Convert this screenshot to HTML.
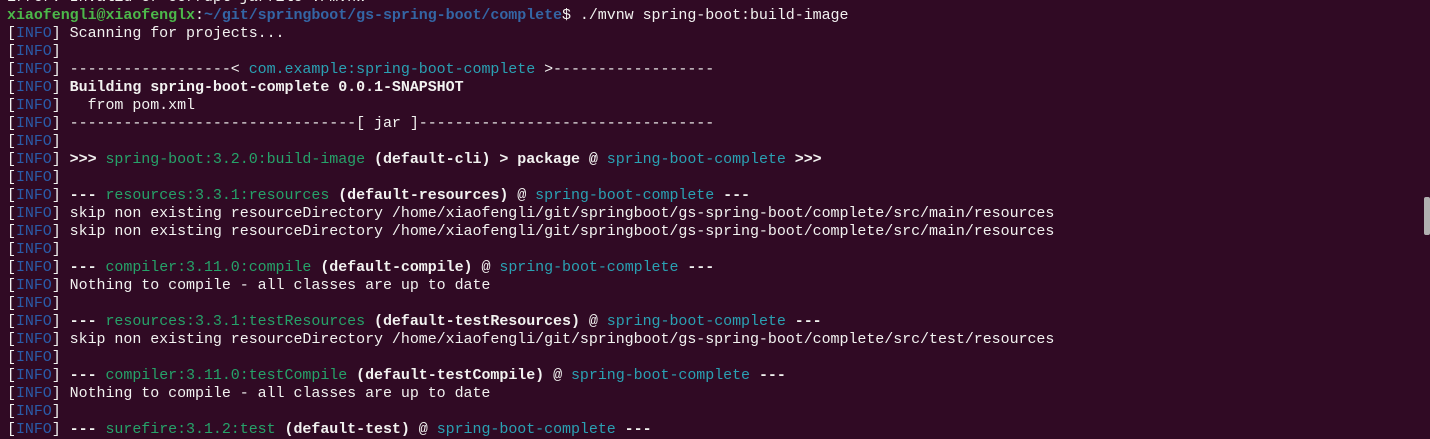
<!DOCTYPE html>
<html><head><meta charset="utf-8"><style>
html,body{margin:0;padding:0;background:#300a24;width:1430px;height:424px;overflow:hidden}
pre{position:absolute;left:7px;top:-11px;margin:0;font:15px/18px "Liberation Mono",monospace;color:#f2f2f0;letter-spacing:-0.05px}
.i{color:#2a5ba8}.b{font-weight:bold}.g{color:#26a269}.c{color:#2aa1b3}.p{color:#3465a4;font-weight:bold}.pg{color:#4cb84a;font-weight:bold}
#sb{position:absolute;left:1424px;top:197px;width:6px;height:38px;background:#b0b0b0;border-radius:2px}
</style></head><body>
<pre>Error: Invalid or corrupt jarfile ./mvnw
<span class="pg">xiaofengli@xiaofenglx</span>:<span class="p">~/git/springboot/gs-spring-boot/complete</span>$ ./mvnw spring-boot:build-image
[<span class="i">INFO</span>] Scanning for projects...
[<span class="i">INFO</span>]
[<span class="i">INFO</span>] ------------------&lt; <span class="c">com.example:spring-boot-complete</span> &gt;------------------
[<span class="i">INFO</span>] <span class="b">Building spring-boot-complete 0.0.1-SNAPSHOT</span>
[<span class="i">INFO</span>]   from pom.xml
[<span class="i">INFO</span>] --------------------------------[ jar ]---------------------------------
[<span class="i">INFO</span>]
[<span class="i">INFO</span>] <span class="b">&gt;&gt;&gt; </span><span class="g">spring-boot:3.2.0:build-image</span> <span class="b">(default-cli) &gt; package @ </span><span class="c">spring-boot-complete</span><span class="b"> &gt;&gt;&gt;</span>
[<span class="i">INFO</span>]
[<span class="i">INFO</span>] <span class="b">--- </span><span class="g">resources:3.3.1:resources</span> <span class="b">(default-resources)</span> @ <span class="c">spring-boot-complete</span><span class="b"> ---</span>
[<span class="i">INFO</span>] skip non existing resourceDirectory /home/xiaofengli/git/springboot/gs-spring-boot/complete/src/main/resources
[<span class="i">INFO</span>] skip non existing resourceDirectory /home/xiaofengli/git/springboot/gs-spring-boot/complete/src/main/resources
[<span class="i">INFO</span>]
[<span class="i">INFO</span>] <span class="b">--- </span><span class="g">compiler:3.11.0:compile</span> <span class="b">(default-compile)</span> @ <span class="c">spring-boot-complete</span><span class="b"> ---</span>
[<span class="i">INFO</span>] Nothing to compile - all classes are up to date
[<span class="i">INFO</span>]
[<span class="i">INFO</span>] <span class="b">--- </span><span class="g">resources:3.3.1:testResources</span> <span class="b">(default-testResources)</span> @ <span class="c">spring-boot-complete</span><span class="b"> ---</span>
[<span class="i">INFO</span>] skip non existing resourceDirectory /home/xiaofengli/git/springboot/gs-spring-boot/complete/src/test/resources
[<span class="i">INFO</span>]
[<span class="i">INFO</span>] <span class="b">--- </span><span class="g">compiler:3.11.0:testCompile</span> <span class="b">(default-testCompile)</span> @ <span class="c">spring-boot-complete</span><span class="b"> ---</span>
[<span class="i">INFO</span>] Nothing to compile - all classes are up to date
[<span class="i">INFO</span>]
[<span class="i">INFO</span>] <span class="b">--- </span><span class="g">surefire:3.1.2:test</span> <span class="b">(default-test)</span> @ <span class="c">spring-boot-complete</span><span class="b"> ---</span>
</pre>
<div id="sb"></div>
</body></html>
